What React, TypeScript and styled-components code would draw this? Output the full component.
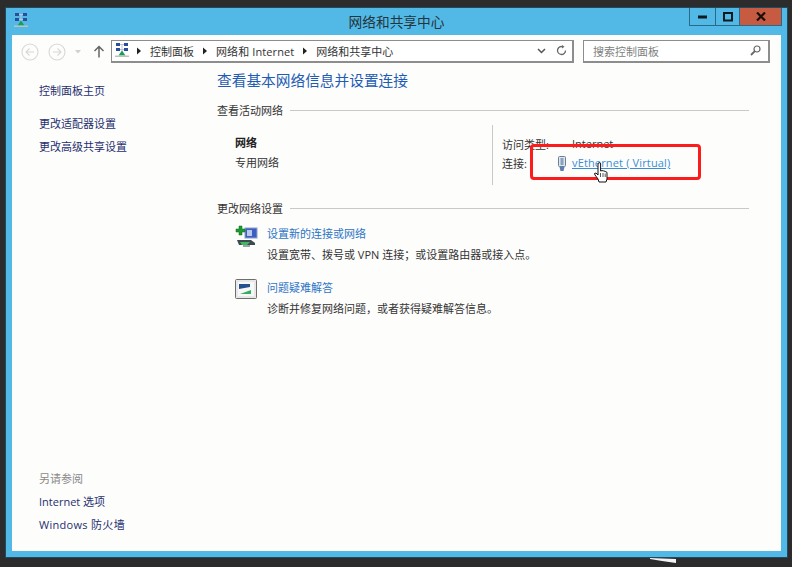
import React from 'react';
import styled, { createGlobalStyle } from 'styled-components';

const GlobalStyle = createGlobalStyle`
  html, body {
    margin: 0;
    padding: 0;
    height: 100%;
    background: #2c2c2c;
    overflow: hidden;
  }
  body {
    font-family: "Open Sans", "Noto Sans CJK SC", sans-serif;
    font-size: 11px;
    color: #333;
  }
`;

const Desktop = styled.div`
  position: relative;
  width: 792px;
  height: 567px;
  padding: 8px 5px 10px 6px;
  box-sizing: border-box;
`;

const Win = styled.div`
  height: 100%;
  box-sizing: border-box;
  background: #52b9e6;
  padding: 0 6px 6px;
  display: flex;
  flex-direction: column;
  box-shadow: 0 0 0 1px #1f4a60;
`;

const TitleBar = styled.div`
  height: 27px;
  flex: none;
  display: grid;
  grid-template-columns: 1fr auto 1fr;
  align-items: start;
`;

const TitleIcon = styled.div`
  display: flex;
  padding: 5px 0 0 2px;
`;

const Title = styled.div`
  font-size: 13.7px;
  line-height: 27px;
  color: #24343c;
`;

const Controls = styled.div`
  justify-self: end;
  display: flex;
  height: 18px;
  border: 1px solid #2a6a88;
  border-top: 0;
  margin-right: -1px;
  box-sizing: border-box;
`;

const CtlButton = styled.div<{ $w: number; $close?: boolean }>`
  width: ${p => p.$w}px;
  display: flex;
  align-items: center;
  justify-content: center;
  background: ${p => (p.$close ? '#c75b42' : '#52b9e6')};
  & + & {
    border-left: 1px solid #2a6a88;
  }
`;

const Client = styled.div`
  flex: 1;
  min-height: 0;
  background: #fdfdfc;
  display: flex;
  flex-direction: column;
`;

const Toolbar = styled.div`
  height: 33px;
  flex: none;
  display: flex;
  align-items: center;
  padding: 0 11px 0 9px;
  box-sizing: border-box;
`;

const NavGroup = styled.div`
  width: 90px;
  display: flex;
  align-items: center;
`;

const NavGap = styled.span`
  width: 9px;
`;

const NavCircle = styled.svg<{ $flip?: boolean }>`
  transform: ${p => (p.$flip ? 'scaleX(-1)' : 'none')};
`;

const AddressBar = styled.div`
  width: 463px;
  height: 23px;
  box-sizing: border-box;
  border: 1px solid #8d8d8d;
  border-right-width: 2px;
  border-bottom-width: 2px;
  background: #fff;
  display: flex;
  align-items: center;
  padding: 0 5px 1px 3px;
  color: #333;
`;

const IconGap = styled.span<{ $w: number }>`
  width: ${p => p.$w}px;
  flex: none;
`;

const Crumb = styled.span<{ $first?: boolean; $spread?: boolean }>`
  margin: 0 7.5px 0 ${p => (p.$first ? '8px' : '8.5px')};
  white-space: nowrap;
  letter-spacing: ${p => (p.$spread ? '0.1px' : '0')};
`;

const CrumbArrow = styled.svg`
  flex: none;
`;

const Spacer = styled.div`
  flex: 1;
`;

const SearchBox = styled.div`
  width: 187px;
  height: 23px;
  margin-left: 9px;
  box-sizing: border-box;
  border: 1px solid #8d8d8d;
  border-right-width: 2px;
  border-bottom-width: 2px;
  background: #fff;
  display: flex;
  align-items: center;
  justify-content: space-between;
  padding: 0 7px 1px 9px;
  color: #808080;
`;

const Body = styled.div`
  flex: 1;
  min-height: 0;
  display: flex;
`;

const Sidebar = styled.div`
  width: 205px;
  flex: none;
  box-sizing: border-box;
  padding: 11px 0 15px 27px;
  display: flex;
  flex-direction: column;
  justify-content: space-between;
`;

const SideGroup = styled.div`
  display: flex;
  flex-direction: column;
`;

const SideLink = styled.div<{ $top?: number; $muted?: boolean; $spread?: boolean }>`
  height: 23px;
  line-height: 23px;
  margin-top: ${p => p.$top ?? 0}px;
  color: ${p => (p.$muted ? '#8a8a8a' : '#1f2f6e')};
  letter-spacing: ${p => (p.$spread ? '0.3px' : '0')};
`;

const Main = styled.div`
  flex: 1;
  min-width: 0;
  padding: 0 32px 0 0;
`;

const Heading = styled.div`
  font-size: 14.7px;
  line-height: 24px;
  height: 24px;
  color: #1f5cb4;
  margin-bottom: 9px;
`;

const Section = styled.div`
  display: flex;
  align-items: center;
  height: 18px;
  gap: 7px;
  color: #333;
  &::after {
    content: '';
    flex: 1;
    height: 1px;
    background: #c9c9c9;
  }
`;

const ActiveNet = styled.div`
  display: flex;
  height: 60px;
  margin-top: 6px;
  margin-bottom: 14px;
`;

const NetInfo = styled.div`
  width: 276px;
  padding: 8px 0 0 18px;
  box-sizing: border-box;
  border-right: 1px solid #c9c9c9;
`;

const NetName = styled.div`
  font-weight: 700;
  line-height: 20px;
  color: #222;
`;

const NetKind = styled.div`
  line-height: 20px;
  color: #333;
`;

const NetProps = styled.div`
  padding: 9px 0 0 9px;
  display: grid;
  grid-template-columns: 70px auto;
  grid-auto-rows: 19px;
  align-items: center;
  color: #333;
`;

const LinkCell = styled.div`
  display: flex;
  align-items: center;
  position: relative;
`;

const AdapterIcon = styled.div`
  position: absolute;
  left: -15px;
  top: 1px;
  display: flex;
`;

const VLink = styled.span`
  color: #3a8ed6;
  text-decoration: underline;
  white-space: nowrap;
  letter-spacing: 0.15px;
`;

const Task = styled.div<{ $top: number }>`
  display: grid;
  grid-template-columns: 32px auto;
  margin: ${p => p.$top}px 0 0 18px;
`;

const TaskIcon = styled.div`
  padding-top: 1px;
  display: flex;
  align-items: flex-start;
`;

const TaskLink = styled.div`
  height: 20px;
  line-height: 20px;
  color: #2c74c4;
`;

const TaskDesc = styled.div`
  height: 22px;
  line-height: 22px;
  color: #333;
`;

const RedBox = styled.div`
  position: absolute;
  left: 530px;
  top: 144px;
  width: 171px;
  height: 36px;
  box-sizing: border-box;
  border: 3px solid #fc1c1c;
  border-radius: 4px;
`;

const Cursor = styled.svg`
  position: absolute;
  left: 593px;
  top: 162px;
`;

const Glitch = styled.svg`
  position: absolute;
  left: 648px;
  top: 557px;
`;

const NetworkIcon = () => (
  <svg width="15" height="15" viewBox="0 0 15 15">
    <rect x="1" y="0" width="4" height="3" fill="#2a4f9a" />
    <rect x="9" y="0" width="4" height="3" fill="#2a4f9a" />
    <rect x="1" y="5" width="4" height="3" fill="#2a4f9a" />
    <rect x="9" y="5" width="4" height="3" fill="#2a4f9a" />
    <path d="M5 1.5h4M5 6.5h4M7 2v6" stroke="#b9c6d8" strokeWidth="1" />
    <path d="M7 7.5 10.5 12.5H3.5Z" fill="#1e9a5c" />
    <rect x="0" y="12.5" width="14" height="1.5" fill="#b9c4b8" />
  </svg>
);

const NavButton = ({ flip }: { flip?: boolean }) => (
  <NavCircle $flip={flip} width="18" height="18" viewBox="0 0 18 18" fill="none" stroke="#d8d8d8" strokeWidth="1.1">
    <circle cx="9" cy="9" r="8" />
    <path d="M13 9H5.5M8.5 5.5 5 9l3.5 3.5" />
  </NavCircle>
);

const Tri = () => (
  <CrumbArrow width="6" height="8" viewBox="0 0 6 8">
    <path d="M1 .5 5 4 1 7.5Z" fill="#222" />
  </CrumbArrow>
);

export default function App() {
  return (
    <>
      <GlobalStyle />
      <Desktop>
        <Win>
          <TitleBar>
            <TitleIcon>
              <NetworkIcon />
            </TitleIcon>
            <Title>网络和共享中心</Title>
            <Controls>
              <CtlButton $w={25}>
                <svg width="10" height="4" viewBox="0 0 10 4"><rect width="9" height="3" y=".5" fill="#0c1a22" /></svg>
              </CtlButton>
              <CtlButton $w={23}>
                <svg width="10" height="10" viewBox="0 0 10 10" fill="none"><rect x="1" y="1" width="8" height="7.5" stroke="#0c1a22" strokeWidth="2" /></svg>
              </CtlButton>
              <CtlButton $w={41} $close>
                <svg width="10" height="9" viewBox="0 0 10 9" fill="none"><path d="M1 .5 9 8.5M9 .5 1 8.5" stroke="#1a0d08" strokeWidth="2.2" /></svg>
              </CtlButton>
            </Controls>
          </TitleBar>
          <Client>
            <Toolbar>
              <NavGroup>
                <NavButton />
                <NavGap />
                <NavButton flip />
                <svg width="27" height="8" viewBox="0 0 27 8"><path d="M9 2h6L12 5.5Z" fill="#d0d0d0" /></svg>
                <svg width="12" height="13" viewBox="0 0 12 13" fill="none" stroke="#666" strokeWidth="1.5"><path d="M6 12.5V1.5M1.5 6 6 1.5 10.5 6" /></svg>
              </NavGroup>
              <AddressBar>
                <NetworkIcon />
                <IconGap $w={6} />
                <Tri />
                <Crumb $first>控制面板</Crumb>
                <Tri />
                <Crumb $spread>网络和 Internet</Crumb>
                <Tri />
                <Crumb>网络和共享中心</Crumb>
                <Spacer />
                <svg width="9" height="6" viewBox="0 0 9 6" fill="none" stroke="#555" strokeWidth="1.5"><path d="M1 1l3.5 3.5L8 1" /></svg>
                <IconGap $w={10} />
                <svg width="11" height="11" viewBox="0 0 11 11" fill="none" stroke="#666" strokeWidth="1.3"><path d="M9.5 5.5A4 4 0 1 1 7 1.8" /><path d="M6 0 8.5 1.8 6 3.6Z" fill="#666" stroke="none" /></svg>
              </AddressBar>
              <SearchBox>
                <span>搜索控制面板</span>
                <svg width="11" height="11" viewBox="0 0 11 11" fill="none" stroke="#666"><circle cx="7" cy="4" r="3" strokeWidth="1.2" /><path d="M4.8 6.2 1 10" strokeWidth="1.8" /></svg>
              </SearchBox>
            </Toolbar>
            <Body>
              <Sidebar>
                <SideGroup>
                  <SideLink>控制面板主页</SideLink>
                  <SideLink $top={10}>更改适配器设置</SideLink>
                  <SideLink>更改高级共享设置</SideLink>
                </SideGroup>
                <SideGroup>
                  <SideLink $muted>另请参阅</SideLink>
                  <SideLink>Internet 选项</SideLink>
                  <SideLink $spread>Windows 防火墙</SideLink>
                </SideGroup>
              </Sidebar>
              <Main>
                <Heading>查看基本网络信息并设置连接</Heading>
                <Section>查看活动网络</Section>
                <ActiveNet>
                  <NetInfo>
                    <NetName>网络</NetName>
                    <NetKind>专用网络</NetKind>
                  </NetInfo>
                  <NetProps>
                    <span>访问类型:</span>
                    <span>Internet</span>
                    <span>连接:</span>
                    <LinkCell>
                      <AdapterIcon>
                        <svg width="10" height="16" viewBox="0 0 10 16">
                          <rect x="1.5" y=".5" width="7" height="10" rx="1" fill="#dfe6ee" stroke="#6c7f96" />
                          <rect x="3.5" y="2" width="3" height="7" fill="#8aa2c0" />
                          <path d="M2.5 11h5L6.5 15h-3Z" fill="#5d7fb0" />
                        </svg>
                      </AdapterIcon>
                      <VLink>vEthernet ( Virtual)</VLink>
                    </LinkCell>
                  </NetProps>
                </ActiveNet>
                <Section>更改网络设置</Section>
                <Task $top={7}>
                  <TaskIcon>
                    <svg width="24" height="24" viewBox="0 0 24 24">
                      <rect x="10" y="3" width="12" height="10" fill="#3c5fc0" stroke="#8ea0c8" />
                      <rect x="12" y="5" width="5" height="6" fill="#b9c9ec" />
                      <path d="M4 1h3v3h3v3H7v3H4V7H1V4h3Z" fill="#1f9a33" stroke="#0d6a1d" strokeWidth=".5" />
                      <path d="M2 15h14l4 3v2H4Z" fill="#3f4a4f" />
                      <path d="M5 17h10l-3 3H7Z" fill="#3dbb5e" />
                      <rect x="8" y="20" width="7" height="2" fill="#9aa3a8" />
                    </svg>
                  </TaskIcon>
                  <div>
                    <TaskLink>设置新的连接或网络</TaskLink>
                    <TaskDesc>设置宽带、拨号或 VPN 连接；或设置路由器或接入点。</TaskDesc>
                  </div>
                </Task>
                <Task $top={12}>
                  <TaskIcon>
                    <svg width="23" height="21" viewBox="0 0 23 21">
                      <rect x=".5" y=".5" width="21" height="19" rx="1" fill="#e8e8e8" stroke="#6e6e6e" />
                      <rect x="3" y="3" width="16" height="14" fill="#f7f7f7" />
                      <path d="M4 5h11v3l-11 2Z" fill="#23508f" />
                      <path d="M5 15l11-4v4Z" fill="#37ad5e" />
                    </svg>
                  </TaskIcon>
                  <div>
                    <TaskLink>问题疑难解答</TaskLink>
                    <TaskDesc>诊断并修复网络问题，或者获得疑难解答信息。</TaskDesc>
                  </div>
                </Task>
              </Main>
            </Body>
          </Client>
        </Win>
        <RedBox />
        <Cursor width="18" height="24" viewBox="0 0 18 24">
          <path d="M5 2a1.3 1.3 0 0 1 2.6 0v7l1.4-.4 1.6.3 1.6.5 1.8 1V17l-1 3H6l-1-3-3-4-.5-1.5L3 11l2 2Z" fill="#fff" stroke="#111" strokeWidth="1" />
          <path d="M7.5 11v4M10 11v4M12.2 11.5V15" stroke="#111" strokeWidth=".7" />
        </Cursor>
        <Glitch width="30" height="6" viewBox="0 0 30 6">
          <path d="M2 1 28 2V6L14 4 2 2Z" fill="#f4f4f4" />
        </Glitch>
      </Desktop>
    </>
  );
}
